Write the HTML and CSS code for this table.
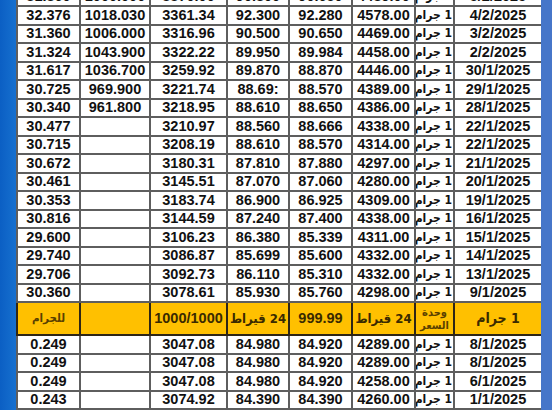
FILE: index.html
```html
<!DOCTYPE html>
<html lang="ar">
<head>
<meta charset="utf-8">
<link rel="stylesheet" href="styles.css">
</head>
<body>
<div class="page">
  <div class="bar-left"></div>
  <div class="wrap">
    <table class="prices">
      <colgroup>
        <col class="c1"><col class="c2"><col class="c3"><col class="c4"><col class="c5"><col class="c6"><col class="c7"><col class="c8">
      </colgroup>
      <tbody>
        <tr><td>31.860</td><td>1000.000</td><td>3370.00</td><td>90.800</td><td>90.650</td><td>4489.00</td><td class="unit" dir="rtl">1 جرام</td><td>5/2/2025</td></tr>
        <tr><td>32.376</td><td>1018.030</td><td>3361.34</td><td>92.300</td><td>92.280</td><td>4578.00</td><td class="unit" dir="rtl">1 جرام</td><td>4/2/2025</td></tr>
        <tr><td>31.360</td><td>1006.000</td><td>3316.96</td><td>90.500</td><td>90.650</td><td>4469.00</td><td class="unit" dir="rtl">1 جرام</td><td>3/2/2025</td></tr>
        <tr><td>31.324</td><td>1043.900</td><td>3322.22</td><td>89.950</td><td>89.984</td><td>4458.00</td><td class="unit" dir="rtl">1 جرام</td><td>2/2/2025</td></tr>
        <tr><td>31.617</td><td>1036.700</td><td>3259.92</td><td>89.870</td><td>88.870</td><td>4446.00</td><td class="unit" dir="rtl">1 جرام</td><td>30/1/2025</td></tr>
        <tr><td>30.725</td><td>969.900</td><td>3221.74</td><td>88.69:</td><td>88.570</td><td>4389.00</td><td class="unit" dir="rtl">1 جرام</td><td>29/1/2025</td></tr>
        <tr><td>30.340</td><td>961.800</td><td>3218.95</td><td>88.610</td><td>88.650</td><td>4386.00</td><td class="unit" dir="rtl">1 جرام</td><td>28/1/2025</td></tr>
        <tr><td>30.477</td><td></td><td>3210.97</td><td>88.560</td><td>88.666</td><td>4338.00</td><td class="unit" dir="rtl">1 جرام</td><td>22/1/2025</td></tr>
        <tr><td>30.715</td><td></td><td>3208.19</td><td>88.610</td><td>88.570</td><td>4314.00</td><td class="unit" dir="rtl">1 جرام</td><td>22/1/2025</td></tr>
        <tr><td>30.672</td><td></td><td>3180.31</td><td>87.810</td><td>87.880</td><td>4297.00</td><td class="unit" dir="rtl">1 جرام</td><td>21/1/2025</td></tr>
        <tr><td>30.461</td><td></td><td>3145.51</td><td>87.070</td><td>87.060</td><td>4280.00</td><td class="unit" dir="rtl">1 جرام</td><td>20/1/2025</td></tr>
        <tr><td>30.353</td><td></td><td>3183.74</td><td>86.900</td><td>86.925</td><td>4309.00</td><td class="unit" dir="rtl">1 جرام</td><td>19/1/2025</td></tr>
        <tr><td>30.816</td><td></td><td>3144.59</td><td>87.240</td><td>87.400</td><td>4338.00</td><td class="unit" dir="rtl">1 جرام</td><td>16/1/2025</td></tr>
        <tr><td>29.600</td><td></td><td>3106.23</td><td>86.380</td><td>85.339</td><td>4311.00</td><td class="unit" dir="rtl">1 جرام</td><td>15/1/2025</td></tr>
        <tr><td>29.740</td><td></td><td>3086.87</td><td>85.699</td><td>85.600</td><td>4332.00</td><td class="unit" dir="rtl">1 جرام</td><td>14/1/2025</td></tr>
        <tr><td>29.706</td><td></td><td>3092.73</td><td>86.110</td><td>85.310</td><td>4332.00</td><td class="unit" dir="rtl">1 جرام</td><td>13/1/2025</td></tr>
        <tr><td>30.360</td><td></td><td>3078.61</td><td>85.930</td><td>85.760</td><td>4298.00</td><td class="unit" dir="rtl">1 جرام</td><td>9/1/2025</td></tr>
        <tr class="head">
          <td class="small" dir="rtl">للجرام</td><td></td><td>1000/1000</td><td class="ar" dir="rtl">24 قيراط</td><td>999.99</td><td class="ar" dir="rtl">24 قيراط</td><td class="small two" dir="rtl">وحدة<br>السعر</td><td class="ar big" dir="rtl">1 جرام</td>
        </tr>
        <tr><td>0.249</td><td></td><td>3047.08</td><td>84.980</td><td>84.920</td><td>4289.00</td><td class="unit" dir="rtl">1 جرام</td><td>8/1/2025</td></tr>
        <tr><td>0.249</td><td></td><td>3047.08</td><td>84.980</td><td>84.920</td><td>4289.00</td><td class="unit" dir="rtl">1 جرام</td><td>8/1/2025</td></tr>
        <tr><td>0.249</td><td></td><td>3047.08</td><td>84.980</td><td>84.920</td><td>4258.00</td><td class="unit" dir="rtl">1 جرام</td><td>6/1/2025</td></tr>
        <tr><td>0.243</td><td></td><td>3074.92</td><td>84.390</td><td>84.390</td><td>4260.00</td><td class="unit" dir="rtl">1 جرام</td><td>1/1/2025</td></tr>
        <tr><td>0.243</td><td></td><td>3074.92</td><td>84.390</td><td>84.390</td><td>4260.00</td><td class="unit" dir="rtl">1 جرام</td><td>31/12/2024</td></tr>
      </tbody>
    </table>
  </div>
  <div class="bar-right"></div>
</div>
</body>
</html>
```
FILE: styles.css
```css
html, body {
  margin: 0;
  padding: 0;
  background: #ffffff;
}
.page {
  display: flex;
  width: 552px;
  height: 410px;
  overflow: hidden;
}
.bar-left {
  width: 16px;
  flex: none;
  background: linear-gradient(90deg, #0b5fc4, #1670cf);
}
.bar-right {
  width: 11px;
  flex: none;
  background: #4676c9;
}
.wrap {
  width: 525px;
  flex: none;
  overflow: hidden;
}
.prices {
  width: 525px;
  margin-top: -13.5px;
  border-collapse: collapse;
  table-layout: fixed;
  font-family: "Liberation Sans", Arial, sans-serif;
  font-weight: bold;
  font-size: 14.5px;
  color: #111111;
  background: #ffffff;
}
.c1 { width: 63px; }
.c2 { width: 70px; }
.c3 { width: 77px; }
.c4 { width: 62px; }
.c5 { width: 63px; }
.c6 { width: 63px; }
.c7 { width: 39px; }
.c8 { width: 88px; }
.prices tr {
  height: 18.5px;
}
.prices td {
  border: 2px solid #5e5e5e;
  padding: 0;
  text-align: center;
  line-height: 15px;
  white-space: nowrap;
  overflow: hidden;
}
.prices td.unit {
  font-family: "DejaVu Sans Condensed", "DejaVu Sans", sans-serif;
  font-size: 12px;
  font-weight: bold;
  text-align: right;
  padding-right: 1px;
  letter-spacing: -0.5px;
}
.prices tr.head {
  height: 33px;
}
.prices tr.head td {
  background: #ffc000;
  color: #3a2a00;
  border-color: #2e2616;
}
.prices tr.head td.ar {
  font-family: "DejaVu Sans Condensed", "DejaVu Sans", sans-serif;
  font-size: 13px;
}
.prices tr.head td.big {
  font-size: 14px;
}
.prices tr.head td.small {
  font-family: "DejaVu Sans Condensed", "DejaVu Sans", sans-serif;
  font-size: 11.5px;
  font-weight: bold;
  color: #5a4000;
}
.prices tr.head td.two {
  line-height: 13px;
  font-size: 11px;
}
```
